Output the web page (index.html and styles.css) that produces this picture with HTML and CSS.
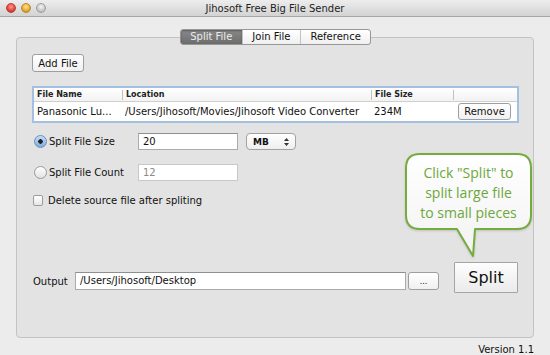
FILE: index.html
```html
<!DOCTYPE html>
<html lang="en">

<head>
  <meta charset="UTF-8">
  <meta name="viewport" content="width=device-width, initial-scale=1.0">
  <title>Jihosoft Free Big File Sender</title>
  <link rel="stylesheet" href="styles.css">
</head>

<body>
  <div class="titlebar">
    <div class="lights">
      <span class="light light-close"></span>
      <span class="light light-min"></span>
      <span class="light light-zoom"></span>
    </div>
    <div class="title">Jihosoft Free Big File Sender</div>
    <div></div>
  </div>

  <div class="group">
    <div class="tabs">
      <span class="tab active">Split File</span>
      <span class="tab">Join File</span>
      <span class="tab">Reference</span>
    </div>

    <button class="btn btn-add">Add File</button>

    <div class="filelist">
      <div class="list-row list-head">
        <span class="cell col-name">File Name</span>
        <span class="cell col-loc">Location</span>
        <span class="cell col-size">File Size</span>
        <span class="cell col-act"></span>
      </div>
      <div class="list-row list-item">
        <span class="cell col-name">Panasonic Lu...</span>
        <span class="cell col-loc">/Users/Jihosoft/Movies/Jihosoft Video Converter</span>
        <span class="cell col-size">234M</span>
        <span class="cell col-act"><button class="btn btn-remove">Remove</button></span>
      </div>
    </div>

    <div class="option-row first">
      <label class="opt-label"><span class="radio checked"></span>Split File Size</label>
      <div class="field">20</div>
      <div class="select">MB
        <svg class="arrows" width="5" height="8" viewBox="0 0 5 8">
          <path d="M0 3 L2.5 0 L5 3 Z M0 5 L2.5 8 L5 5 Z" fill="#333" />
        </svg>
      </div>
    </div>

    <div class="option-row">
      <label class="opt-label"><span class="radio"></span>Split File Count</label>
      <div class="field disabled">12</div>
    </div>

    <div class="check-row">
      <span class="checkbox"></span>Delete source file after spliting
    </div>

    <div class="output-row">
      <div class="output-line">
        <span class="output-label">Output</span>
        <div class="field output-field">/Users/Jihosoft/Desktop</div>
        <button class="btn btn-browse">...</button>
      </div>
      <button class="btn-split">Split</button>
    </div>

    <div class="bubble">
      <svg width="130" height="108" viewBox="0 0 130 108">
        <defs>
          <linearGradient id="bubbleFill" x1="0" y1="0" x2="0" y2="1">
            <stop offset="0" stop-color="#ffffff" />
            <stop offset="1" stop-color="#f2f2f2" />
          </linearGradient>
        </defs>
        <path d="M16 2 H113 Q127 2 127 16 V63 Q127 77 113 77 H71 L69 104 L53 77 H16 Q2 77 2 63 V16 Q2 2 16 2 Z"
          fill="url(#bubbleFill)" stroke="#74ac3f" stroke-width="2" stroke-linejoin="round" />
      </svg>
      <div class="bubble-text">Click "Split" to<br>split large file<br>to small pieces</div>
    </div>
  </div>

  <div class="version">Version 1.1</div>
</body>

</html>
```

FILE: styles.css
```css
body {
  margin: 0;
  width: 550px;
  height: 355px;
  overflow: hidden;
  background: #ececec;
  font: 10px "DejaVu Sans", sans-serif;
  color: #111;
}

.titlebar {
  height: 16px;
  display: grid;
  grid-template-columns: 1fr auto 1fr;
  align-items: center;
  background: linear-gradient(#ededed, #d3d3d3);
  border-bottom: 1px solid #a6a6a6;
}

.lights {
  display: flex;
  gap: 5px;
  padding-left: 6px;
}

.light {
  width: 10px;
  height: 10px;
  border-radius: 50%;
  box-sizing: border-box;
}

.light-close {
  background: radial-gradient(circle at 50% 35%, #ff9a90, #e0443a 60%, #a82a22);
  border: 1px solid #b8403a;
}

.light-min {
  background: radial-gradient(circle at 50% 35%, #ffe39a, #e9a72c 60%, #b07a16);
  border: 1px solid #b8892c;
}

.light-zoom {
  background: radial-gradient(circle at 50% 35%, #f4f4f4, #c8c8c8 60%, #a2a2a2);
  border: 1px solid #9d9d9d;
}

.title {
  color: #222;
}

.group {
  position: relative;
  box-sizing: border-box;
  height: 301px;
  margin: 20px 16px 0;
  padding: 0 14px 0 15px;
  display: flex;
  flex-direction: column;
  align-items: flex-start;
  background: #e3e3e3;
  border: 1px solid #c3c3c3;
  border-radius: 4px;
}

.tabs {
  align-self: center;
  display: flex;
  margin-top: -9px;
  height: 16px;
  box-sizing: border-box;
  border: 1px solid #979797;
  border-radius: 3px;
  overflow: hidden;
  background: linear-gradient(#ffffff, #efefef);
}

.tab {
  padding: 0 9.5px;
  line-height: 14px;
  border-left: 1px solid #c2c2c2;
}

.tab:first-child {
  border-left: none;
}

.tab.active {
  color: #ececec;
  background: linear-gradient(#8a8a8a, #6c6c6c);
  box-shadow: inset 0 1px 2px rgba(0, 0, 0, 0.35);
}

.btn {
  font: inherit;
  color: #111;
  padding: 0;
  box-sizing: border-box;
  border: 1px solid #9e9e9e;
  border-radius: 3px;
  background: linear-gradient(#ffffff, #f0f0f0);
}

.btn-add {
  margin-top: 9px;
  width: 52px;
  height: 18px;
}

.filelist {
  align-self: stretch;
  margin-top: 14px;
  box-sizing: border-box;
  height: 37px;
  border: 2px solid #a3c0e2;
  background: #fff;
}

.list-row {
  display: flex;
  align-items: center;
}

.list-head {
  height: 13px;
  font-size: 8px;
  font-weight: bold;
  color: #222;
  background: linear-gradient(#ffffff, #f2f2f2);
  border-bottom: 1px solid #cfcfcf;
}

.list-item {
  height: 19px;
}

.cell {
  box-sizing: border-box;
  padding-left: 3px;
  white-space: nowrap;
  overflow: hidden;
}

.list-head .cell + .cell {
  border-left: 1px solid #c0c0c0;
  line-height: 10px;
}

.col-name {
  width: 88px;
}

.col-loc {
  width: 249px;
}

.col-size {
  width: 82px;
}

.col-act {
  flex: 1;
  padding-left: 5px;
  height: 10px;
}

.list-item .col-act {
  height: auto;
  display: flex;
}

.btn-remove {
  width: 53px;
  height: 17px;
}

.option-row {
  display: flex;
  align-items: center;
  height: 17px;
  margin-top: 14px;
}

.option-row.first {
  margin-top: 10px;
}

.opt-label {
  width: 106px;
  display: flex;
  align-items: center;
  gap: 2px;
}

.radio {
  margin-left: 2px;
  width: 13px;
  height: 13px;
  box-sizing: border-box;
  border-radius: 50%;
  border: 1px solid #9a9a9a;
  background: linear-gradient(#ffffff, #e2e2e2);
}

.radio.checked {
  border-color: #6f8fb8;
  background: radial-gradient(circle, #1d2430 0 2px, transparent 2.5px),
    linear-gradient(#c9ddf3, #7eabdc);
}

.field {
  box-sizing: border-box;
  width: 100px;
  height: 17px;
  padding-left: 4px;
  line-height: 15px;
  background: #fff;
  border: 1px solid #ababab;
  border-top-color: #8f8f8f;
}

.field.disabled {
  color: #8a8a8a;
  border-color: #c8c8c8;
}

.select {
  box-sizing: border-box;
  width: 50px;
  height: 17px;
  margin-left: 8px;
  padding: 0 6px 0 6px;
  display: flex;
  align-items: center;
  justify-content: space-between;
  font-size: 9px;
  font-weight: bold;
  border: 1px solid #a2a2a2;
  border-radius: 4px;
  background: linear-gradient(#ffffff, #eeeeee);
}

.arrows {
  display: block;
}

.check-row {
  display: flex;
  align-items: center;
  gap: 5px;
  height: 12px;
  margin-top: 13px;
  padding-left: 1px;
}

.checkbox {
  width: 10px;
  height: 11px;
  box-sizing: border-box;
  border: 1px solid #9c9c9c;
  border-radius: 2px;
  background: linear-gradient(#ffffff, #e6e6e6);
}

.output-row {
  display: flex;
  align-items: flex-start;
  margin-top: 56px;
}

.output-line {
  display: flex;
  align-items: center;
  margin-top: 10px;
  height: 18px;
}

.output-label {
  width: 43px;
  box-sizing: border-box;
  padding-left: 1px;
}

.output-field {
  width: 331px;
  height: 18px;
  line-height: 16px;
}

.btn-browse {
  margin-left: 2px;
  width: 31px;
  height: 18px;
  font-size: 8px;
}

.btn-split {
  margin-left: 15px;
  width: 64px;
  height: 31px;
  padding: 0;
  font: 16px "DejaVu Sans", sans-serif;
  color: #111;
  border: 1px solid #a4a4a4;
  border-radius: 1px;
  background: linear-gradient(#fdfdfd, #ebebeb);
}

.bubble {
  position: absolute;
  left: 387px;
  top: 114px;
  width: 130px;
  height: 108px;
}

.bubble svg {
  display: block;
  filter: drop-shadow(0 1px 1px rgba(0, 0, 0, 0.15));
}

.bubble-text {
  position: absolute;
  left: 2px;
  top: 11px;
  width: 125px;
  text-align: center;
  font: 14px/20px "Open Sans", sans-serif;
  color: #6ca83b;
}

.version {
  margin-top: 6px;
  padding-right: 16px;
  text-align: right;
  line-height: 12px;
}
```
